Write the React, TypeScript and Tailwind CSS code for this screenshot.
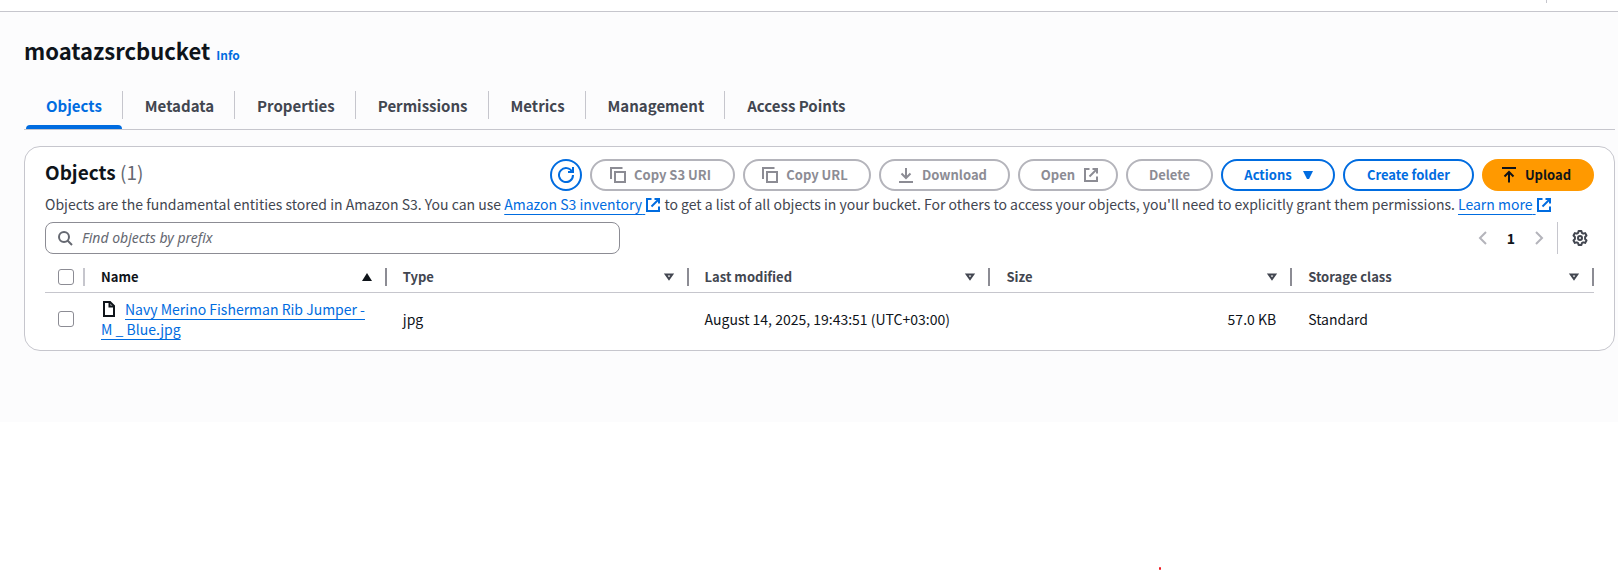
import React, { useState } from "react";

type IconProps = { children: React.ReactNode; className?: string };

function Icon({ children, className = "" }: IconProps) {
  return (
    <svg
      viewBox="0 0 16 16"
      fill="none"
      stroke="currentColor"
      strokeWidth={2}
      aria-hidden="true"
      className={`size-4 shrink-0 ${className}`}
    >
      {children}
    </svg>
  );
}

const CopyIcon = () => (
  <Icon>
    <path d="M5 5h10v10H5z" />
    <path d="M1 12V1h11.5" />
  </Icon>
);

const ExternalIcon = ({ className = "" }: { className?: string }) => (
  <Icon className={className}>
    <path d="M9.5 2H14v4.5" />
    <path d="m6.5 9.5 7-7" />
    <path d="M14 9.5V14H2V2h4.5" />
  </Icon>
);

const SortIcon = ({ active = false }: { active?: boolean }) =>
  active ? (
    <Icon>
      <path d="M8 4 13 12H3z" fill="currentColor" stroke="none" />
    </Icon>
  ) : (
    <Icon>
      <path d="M4.800 5.500h6.400L8 10z" />
    </Icon>
  );

const TABS = ["Objects", "Metadata", "Properties", "Permissions", "Metrics", "Management", "Access Points"];
const COLUMNS = ["Name", "Type", "Last modified", "Size", "Storage class"];

const BUTTON = "flex h-8 items-center justify-center rounded-full border-2 text-[13px] leading-5 font-bold whitespace-nowrap";
const DISABLED = "border-[#b4b4bb] text-[#8c8c94]";
const NORMAL = "border-[#006ce0] text-[#006ce0]";
const LINK = "text-[#006ce0] underline decoration-1 underline-offset-4 [text-decoration-skip-ink:none]";
const CHECKBOX = "block size-4 appearance-none rounded-[3px] border border-[#8c8c94] bg-white checked:bg-[#006ce0]";

export default function App() {
  const [tab, setTab] = useState("Objects");
  const [query, setQuery] = useState("");

  return (
    <div className="relative min-h-screen bg-white font-['Noto_Sans_CJK_SC','Noto_Sans',sans-serif] text-sm leading-5 text-[#0f141a]">
      <header className="flex h-3 items-start justify-end border-b border-[#c6c6cd] pr-[71px]">
        <span className="h-[3px] w-px bg-[#c6c6cd]" />
      </header>

      <main className="bg-[#fcfcfd] pt-[23px] pr-[3px] pb-[71px] pl-6">
        <div className="flex items-baseline gap-1.5">
          <h1 className="text-[22px] leading-[30px] font-bold">moatazsrcbucket</h1>
          <a href="#info" className="text-xs leading-4 font-bold text-[#006ce0]">Info</a>
        </div>

        <div role="tablist" className="mt-[21px] flex border-b border-[#c6c6cd]">
          {TABS.map((name, i) => (
            <div key={name} className="flex items-start">
              <button
                type="button"
                role="tab"
                aria-selected={tab === name}
                onClick={() => setTab(name)}
                className={`ml-0.5 flex h-[43px] flex-col justify-between text-[15px] leading-5 font-bold ${
                  tab === name ? "text-[#006ce0]" : "text-[#424650]"
                }`}
              >
                <span className="px-5 pt-2.5">{name}</span>
                <span className={`h-1 w-full rounded-t-sm ${tab === name ? "bg-[#006ce0]" : ""}`} />
              </button>
              {i < TABS.length - 1 && <span className="mt-[5px] h-7 w-px bg-[#c6c6cd]" />}
            </div>
          ))}
        </div>

        <section className="mt-4 rounded-2xl border border-[#c6c6cd] bg-white px-5 pt-3 pb-[5px]">
          <div className="flex items-start justify-between gap-4">
            <h2 className="pt-px text-[19px] leading-6 font-bold">
              Objects <span className="font-normal text-[#656871]">(1)</span>
            </h2>
            <div className="flex flex-wrap justify-end gap-2">
              <button type="button" aria-label="Refresh" className={`${BUTTON} ${NORMAL} w-8`}>
                <Icon>
                  <path d="M10 5h5V0" />
                  <path d="M15 8a7 7 0 1 1-.7-3" />
                </Icon>
              </button>
              <button type="button" disabled className={`${BUTTON} ${DISABLED} min-w-[145px] gap-2 pr-5 pl-4`}>
                <CopyIcon />
                Copy S3 URI
              </button>
              <button type="button" disabled className={`${BUTTON} ${DISABLED} min-w-32 gap-2 pr-5 pl-4`}>
                <CopyIcon />
                Copy URL
              </button>
              <button type="button" disabled className={`${BUTTON} ${DISABLED} min-w-[131px] gap-2 pr-5 pl-4`}>
                <Icon>
                  <path d="M8 1v10" />
                  <path d="m3.500 6.500 4.500 4.500 4.500-4.500" />
                  <path d="M1 15h14" />
                </Icon>
                Download
              </button>
              <button type="button" disabled className={`${BUTTON} ${DISABLED} min-w-[100px] gap-2 pr-4 pl-5`}>
                Open
                <ExternalIcon />
              </button>
              <button type="button" disabled className={`${BUTTON} ${DISABLED} min-w-[87px] px-5`}>
                Delete
              </button>
              <button type="button" className={`${BUTTON} ${NORMAL} min-w-[114px] gap-2 pr-4 pl-5`}>
                Actions
                <Icon>
                  <path d="M3 4h10L9 12H7z" fill="currentColor" stroke="none" />
                </Icon>
              </button>
              <button type="button" className={`${BUTTON} ${NORMAL} min-w-[131px] px-5`}>
                Create folder
              </button>
              <button
                type="button"
                className={`${BUTTON} min-w-28 gap-2 border-[#ff9900] bg-[#ff9900] pr-5 pl-4 text-[#0f141a]`}
              >
                <Icon>
                  <path d="M1 1h14" />
                  <path d="M8 15.500V5" />
                  <path d="m3.500 9.500 4.500-4.500 4.500 4.500" />
                </Icon>
                Upload
              </button>
            </div>
          </div>

          <p className="mt-[3px] text-[#424650]">
            Objects are the fundamental entities stored in Amazon S3. You can use{" "}
            <a href="#inventory" className={LINK}>
              Amazon S3 inventory{"\u00a0"}
              <ExternalIcon className="inline-block align-[-3px]" />
            </a>{" "}
            to get a list of all objects in your bucket. For others to access your objects, you'll need to explicitly
            grant them permissions.{" "}
            <a href="#learn-more" className={LINK}>
              Learn more{"\u00a0"}
              <ExternalIcon className="inline-block align-[-3px]" />
            </a>
          </p>

          <div className="mt-2 flex items-center justify-between">
            <label className="flex h-8 w-[575px] items-center gap-[9px] rounded-lg border border-[#8c8c94] px-[11px] text-[#656871]">
              <Icon>
                <circle cx="7" cy="7" r="5" />
                <path d="m15 15-4.500-4.500" />
              </Icon>
              <input
                type="text"
                aria-label="Find objects by prefix"
                placeholder="Find objects by prefix"
                value={query}
                onChange={(e) => setQuery(e.target.value)}
                className="min-w-0 flex-1 bg-transparent font-['Noto_Sans',sans-serif] text-[#0f141a] outline-none placeholder:text-[#656871] placeholder:italic"
              />
            </label>
            <div className="flex items-center">
              <button type="button" disabled aria-label="Previous page" className="text-[#b4b4bb]">
                <Icon>
                  <path d="m11 2-6 6 6 6" />
                </Icon>
              </button>
              <button type="button" aria-current="page" className="w-10 text-center font-bold">
                1
              </button>
              <button type="button" disabled aria-label="Next page" className="text-[#b4b4bb]">
                <Icon>
                  <path d="m5 2 6 6-6 6" />
                </Icon>
              </button>
              <span className="mr-3.5 ml-2.5 h-8 w-px bg-[#c6c6cd]" />
              <button type="button" aria-label="Preferences" className="mr-1.5 text-[#424650]">
                <Icon>
                  <path
                    d="M6.600 1h2.800l.5 1.900 1.300.75 1.900-.55 1.400 2.400L13.100 7v2l1.400 1.500-1.400 2.400-1.900-.55-1.300.75L9.400 15H6.600l-.5-1.900-1.300-.75-1.900.55-1.400-2.400L2.900 9V7L1.500 5.500l1.400-2.400 1.900.55 1.300-.75z"
                    strokeLinejoin="round"
                  />
                  <circle cx="8" cy="8" r="2" />
                </Icon>
              </button>
            </div>
          </div>

          <table className="mt-2 w-full table-fixed border-collapse text-left">
            <colgroup>
              <col className="w-10" />
              {COLUMNS.map((name) => (
                <col key={name} />
              ))}
            </colgroup>
            <thead>
              <tr className="border-b border-[#c6c6cd]">
                <th scope="col" className="h-[30px] p-0">
                  <div className="flex items-center justify-between pl-[13px]">
                    <input type="checkbox" aria-label="Select all objects" className={CHECKBOX} />
                    <span className="h-[18px] w-0.5 bg-[#c6c6cd]" />
                  </div>
                </th>
                {COLUMNS.map((name, i) => (
                  <th key={name} scope="col" className="p-0 text-[13px]">
                    <div className="flex items-center pl-4">
                      <span className={`flex-1 ${i === 0 ? "" : "text-[#424650]"}`}>{name}</span>
                      <button
                        type="button"
                        aria-label={`Sort by ${name}`}
                        className={i === 0 ? "text-[#0f141a]" : "text-[#424650]"}
                      >
                        <SortIcon active={i === 0} />
                      </button>
                      <span className="ml-2.5 h-[18px] w-0.5 bg-[#8c8c94]" />
                    </div>
                  </th>
                ))}
              </tr>
            </thead>
            <tbody>
              <tr>
                <td className="py-1.5 pl-[13px]">
                  <input type="checkbox" aria-label="Select Navy Merino Fisherman Rib Jumper" className={CHECKBOX} />
                </td>
                <td className="py-1.5 pr-4 pl-4">
                  <Icon className="mr-2 inline-block align-[-2px]">
                    <path d="M3 1h6l4 4v10H3z" />
                    <path d="M8.500 1v4.500H13" />
                  </Icon>
                  <a href="#object" className={LINK}>
                    Navy Merino Fisherman Rib Jumper - M _ Blue.jpg
                  </a>
                </td>
                <td className="py-1.5 pr-4 pl-4">jpg</td>
                <td className="py-1.5 pr-4 pl-4">August 14, 2025, 19:43:51 (UTC+03:00)</td>
                <td className="py-1.5 pr-4 pl-4 text-right">57.0 KB</td>
                <td className="py-1.5 pr-4 pl-4">Standard</td>
              </tr>
            </tbody>
          </table>
        </section>
      </main>

      <span className="absolute top-[567px] left-[1159px] h-[3px] w-0.5 rounded-full bg-[#ed1c24]" />
    </div>
  );
}
